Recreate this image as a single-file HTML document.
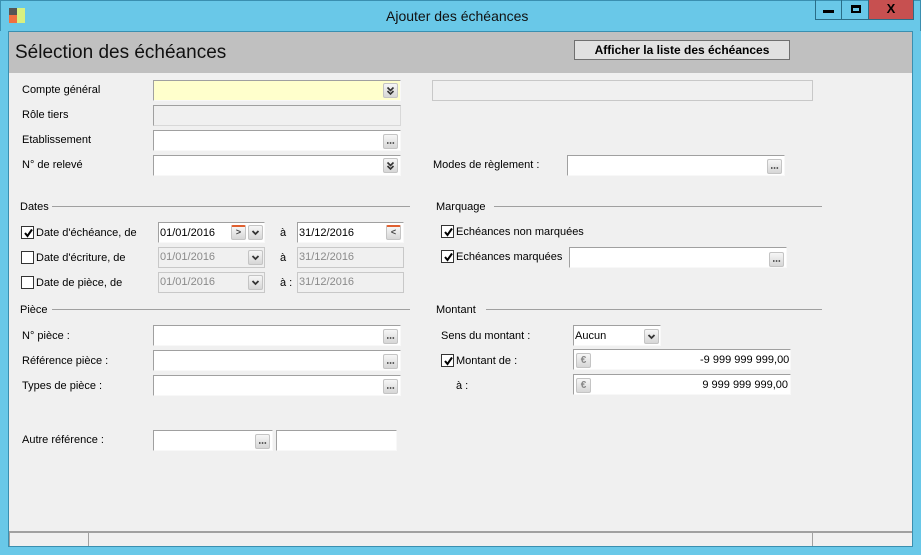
<!DOCTYPE html>
<html><head><meta charset="utf-8">
<style>
*{margin:0;padding:0;box-sizing:border-box}
body{width:921px;height:555px;background:#69c8e8;font-family:"Liberation Sans",sans-serif;font-size:11px;color:#000;position:relative;overflow:hidden}
.a{position:absolute}
.title{left:0;top:0;width:921px;height:31px;border:1px solid #3a8fb0;border-bottom:none}
.client{left:8px;top:31px;width:905px;height:516px;background:#f0f0f0;border:1px solid #3a8fb0}
.hdr{left:9px;top:32px;width:903px;height:41px;background:#c0c0c0}
.in{position:absolute;background:#fff;border-top:1px solid #a0a0a0;border-left:1px solid #a0a0a0;border-right:1px solid #f8f8f8;border-bottom:1px solid #f8f8f8;height:21px}
.dis{background:#f0f0f0;border-right:1px solid #d8d8d8;border-bottom:1px solid #d8d8d8}
.dis2{background:#f0f0f0;border:1px solid #c8c8c8}
.lbl{position:absolute;white-space:nowrap}
.btn{position:absolute;width:15px;height:15px;background:linear-gradient(#f6f6f6,#d6d6d6);border:1px solid #c4c4c4;border-radius:2px;font-size:9px;line-height:11px;text-align:center;color:#444;font-weight:bold}
.btn svg{position:absolute;left:0;top:0}
.sec{position:absolute;height:1px;background:#a0a0a0}
.cb{position:absolute;width:13px;height:13px;background:#fff;border:1px solid #333}
.cb svg{position:absolute;left:1px;top:1px}
.gt{color:#8a8a8a}
</style></head><body>
<svg width="0" height="0" style="position:absolute">
<defs>
<symbol id="dd" viewBox="0 0 13 13"><path d="M3.5 3.5L6.5 6.5L9.5 3.5M3.5 7L6.5 10L9.5 7" fill="none" stroke="#333" stroke-width="1.6"/></symbol>
<symbol id="sd" viewBox="0 0 13 13"><path d="M3.5 5L6.5 8L9.5 5" fill="none" stroke="#333" stroke-width="1.8"/></symbol>
<symbol id="el" viewBox="0 0 13 13"><path d="M3 8h1.5M5.8 8h1.5M8.6 8h1.5" stroke="#333" stroke-width="1.4"/></symbol>
<symbol id="ck" viewBox="0 0 11 11"><path d="M2 5L4.5 8L9 1.5" fill="none" stroke="#000" stroke-width="2"/></symbol>
</defs></svg>
<div class="a title"></div>
<div class="a" style="left:9px;top:8px;width:8px;height:7px;background:#555"></div>
<div class="a" style="left:9px;top:15px;width:8px;height:8px;background:#f07040"></div>
<div class="a" style="left:17px;top:8px;width:8px;height:15px;background:#d8f080"></div>
<div class="lbl" style="left:386px;top:8px;font-size:14px;color:#111">Ajouter des échéances</div>
<div class="a" style="left:815px;top:0;width:27px;height:20px;border:1px solid #2a6d87;border-top:none"></div>
<div class="a" style="left:823px;top:10px;width:11px;height:3px;background:#000"></div>
<div class="a" style="left:842px;top:0;width:27px;height:20px;border:1px solid #2a6d87;border-top:none;border-left:none"></div>
<div class="a" style="left:851px;top:5px;width:10px;height:8px;border:2px solid #000;border-top-width:3px"></div>
<div class="a" style="left:869px;top:0;width:45px;height:20px;background:#c75050;border:1px solid #2a6d87;border-top:none;border-left:none;color:#000;font-weight:bold;font-size:13px;text-align:center;line-height:18px">X</div>
<div class="a client"></div>
<div class="a hdr"></div>
<div class="lbl" style="left:15px;top:42px;font-size:19px;color:#111">Sélection des échéances</div>
<div class="a" style="left:574px;top:40px;width:216px;height:20px;background:#e1e1e1;border:1px solid #707070;text-align:center;font-weight:bold;font-size:12px;line-height:18px">Afficher la liste des échéances</div>

<div class="lbl" style="left:22px;top:84px">Compte général</div>
<div class="in" style="left:153px;top:80px;width:248px;background:#ffffcc"></div>
<div class="btn" style="left:383px;top:83px"><svg width="13" height="13"><use href="#dd"/></svg></div>
<div class="in dis2" style="left:432px;top:80px;width:381px;height:21px;background:#f0f0f0"></div>
<div class="lbl" style="left:22px;top:109px">Rôle tiers</div>
<div class="in dis" style="left:153px;top:105px;width:248px"></div>
<div class="lbl" style="left:22px;top:134px">Etablissement</div>
<div class="in" style="left:153px;top:130px;width:248px"></div>
<div class="btn" style="left:383px;top:134px"><svg width="13" height="13"><use href="#el"/></svg></div>
<div class="lbl" style="left:22px;top:159px">N° de relevé</div>
<div class="in" style="left:153px;top:155px;width:248px"></div>
<div class="btn" style="left:383px;top:158px"><svg width="13" height="13"><use href="#dd"/></svg></div>
<div class="lbl" style="left:433px;top:159px">Modes de règlement :</div>
<div class="in" style="left:567px;top:155px;width:218px"></div>
<div class="btn" style="left:767px;top:159px"><svg width="13" height="13"><use href="#el"/></svg></div>

<div class="lbl" style="left:20px;top:201px">Dates</div>
<div class="sec" style="left:52px;top:206px;width:358px"></div>
<div class="lbl" style="left:436px;top:201px">Marquage</div>
<div class="sec" style="left:494px;top:206px;width:328px"></div>

<div class="cb" style="left:21px;top:226px"><svg width="11" height="11"><use href="#ck"/></svg></div>
<div class="lbl" style="left:36px;top:227px">Date d'échéance, de</div>
<div class="in" style="left:158px;top:222px;width:107px"></div>
<div class="lbl" style="left:160px;top:227px">01/01/2016</div>
<div class="btn" style="left:231px;top:225px;border-top:2px solid #e06030">&gt;</div>
<div class="btn" style="left:248px;top:225px"><svg width="13" height="13"><use href="#sd"/></svg></div>
<div class="lbl" style="left:280px;top:227px">à</div>
<div class="in" style="left:297px;top:222px;width:107px"></div>
<div class="lbl" style="left:299px;top:227px">31/12/2016</div>
<div class="btn" style="left:386px;top:225px;border-top:2px solid #e06030">&lt;</div>

<div class="cb" style="left:21px;top:251px"></div>
<div class="lbl" style="left:36px;top:252px">Date d'écriture, de</div>
<div class="in dis2" style="left:158px;top:247px;width:107px"></div>
<div class="lbl gt" style="left:160px;top:251px">01/01/2016</div>
<div class="btn" style="left:248px;top:250px"><svg width="13" height="13"><use href="#sd"/></svg></div>
<div class="lbl" style="left:280px;top:252px">à</div>
<div class="in dis2" style="left:297px;top:247px;width:107px"></div>
<div class="lbl gt" style="left:299px;top:251px">31/12/2016</div>

<div class="cb" style="left:21px;top:276px"></div>
<div class="lbl" style="left:36px;top:277px">Date de pièce, de</div>
<div class="in dis2" style="left:158px;top:272px;width:107px"></div>
<div class="lbl gt" style="left:160px;top:276px">01/01/2016</div>
<div class="btn" style="left:248px;top:275px"><svg width="13" height="13"><use href="#sd"/></svg></div>
<div class="lbl" style="left:280px;top:277px">à :</div>
<div class="in dis2" style="left:297px;top:272px;width:107px"></div>
<div class="lbl gt" style="left:299px;top:276px">31/12/2016</div>

<div class="cb" style="left:441px;top:225px"><svg width="11" height="11"><use href="#ck"/></svg></div>
<div class="lbl" style="left:456px;top:226px">Echéances non marquées</div>
<div class="cb" style="left:441px;top:250px"><svg width="11" height="11"><use href="#ck"/></svg></div>
<div class="lbl" style="left:456px;top:251px">Echéances marquées</div>
<div class="in" style="left:569px;top:247px;width:218px"></div>
<div class="btn" style="left:769px;top:252px"><svg width="13" height="13"><use href="#el"/></svg></div>

<div class="lbl" style="left:20px;top:304px">Pièce</div>
<div class="sec" style="left:52px;top:309px;width:358px"></div>
<div class="lbl" style="left:436px;top:304px">Montant</div>
<div class="sec" style="left:486px;top:309px;width:336px"></div>

<div class="lbl" style="left:22px;top:330px">N° pièce :</div>
<div class="in" style="left:153px;top:325px;width:248px"></div>
<div class="btn" style="left:383px;top:329px"><svg width="13" height="13"><use href="#el"/></svg></div>
<div class="lbl" style="left:22px;top:355px">Référence pièce :</div>
<div class="in" style="left:153px;top:350px;width:248px"></div>
<div class="btn" style="left:383px;top:354px"><svg width="13" height="13"><use href="#el"/></svg></div>
<div class="lbl" style="left:22px;top:380px">Types de pièce :</div>
<div class="in" style="left:153px;top:375px;width:248px"></div>
<div class="btn" style="left:383px;top:379px"><svg width="13" height="13"><use href="#el"/></svg></div>

<div class="lbl" style="left:441px;top:330px">Sens du montant :</div>
<div class="in" style="left:573px;top:325px;width:88px"></div>
<div class="lbl" style="left:575px;top:330px">Aucun</div>
<div class="btn" style="left:644px;top:329px"><svg width="13" height="13"><use href="#sd"/></svg></div>
<div class="cb" style="left:441px;top:354px"><svg width="11" height="11"><use href="#ck"/></svg></div>
<div class="lbl" style="left:456px;top:355px">Montant de :</div>
<div class="in" style="left:573px;top:349px;width:218px"></div>
<div class="btn" style="left:576px;top:353px;color:#888;font-size:10px;line-height:13px">€</div>
<div class="lbl" style="left:700px;top:354px;width:88px;text-align:right">-9 999 999 999,00</div>
<div class="lbl" style="left:456px;top:380px">à :</div>
<div class="in" style="left:573px;top:374px;width:218px"></div>
<div class="btn" style="left:576px;top:378px;color:#888;font-size:10px;line-height:13px">€</div>
<div class="lbl" style="left:700px;top:379px;width:88px;text-align:right">9 999 999 999,00</div>

<div class="lbl" style="left:22px;top:434px">Autre référence :</div>
<div class="in" style="left:153px;top:430px;width:120px"></div>
<div class="btn" style="left:255px;top:434px"><svg width="13" height="13"><use href="#el"/></svg></div>
<div class="in" style="left:276px;top:430px;width:121px"></div>

<div class="a" style="left:9px;top:531px;width:903px;height:2px;background:#a0a0a0"></div>
<div class="a" style="left:9px;top:533px;width:903px;height:13px;background:#f0f0f0"></div>
<div class="a" style="left:88px;top:533px;width:1px;height:13px;background:#a0a0a0"></div>
<div class="a" style="left:812px;top:533px;width:1px;height:13px;background:#a0a0a0"></div>
<div class="a" style="left:9px;top:533px;width:1px;height:13px;background:#a0a0a0"></div>
</body></html>
